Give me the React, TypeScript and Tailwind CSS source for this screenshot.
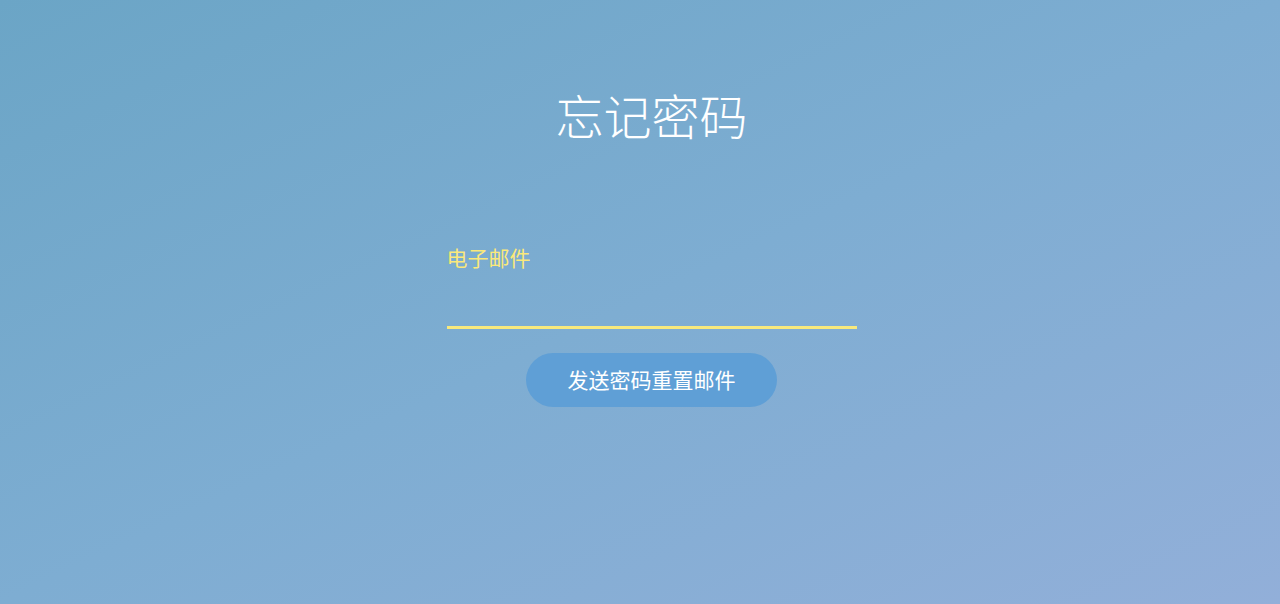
export default function App() {
  return (
    <div
      className="flex min-h-[604px] w-full flex-col items-center bg-gradient-to-br from-[#6ba5c6] via-[#7eadd2] to-[#92afd9] pl-[23px]"
      style={{ fontFamily: '"Noto Sans CJK SC", "Noto Sans", sans-serif' }}
    >
      <h1 className="mt-[90px] text-[48px] font-light leading-[48px] text-white">忘记密码</h1>

      <form className="mt-[109px] flex w-[410px] flex-col items-center" onSubmit={(e) => e.preventDefault()}>
        <label className="w-full">
          <span className="block text-[21px] leading-[21px] text-[#fbe97a]">电子邮件</span>
          <input
            type="email"
            className="mt-[15px] block h-[46px] w-full border-b-[3px] border-[#f8e97c] bg-transparent text-[21px] text-white outline-none"
          />
        </label>
        <button
          type="submit"
          className="mt-[24px] h-[54px] w-[251px] rounded-full bg-[#5f9fd6] text-[21px] text-white"
        >
          发送密码重置邮件
        </button>
      </form>
    </div>
  );
}
